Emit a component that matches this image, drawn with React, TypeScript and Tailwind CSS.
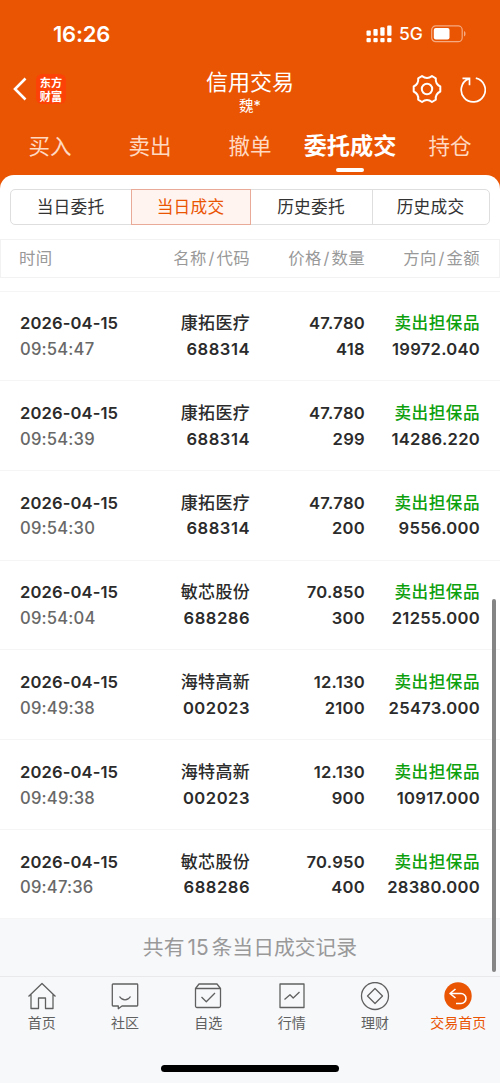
import type { ReactNode } from 'react'

interface Trade {
  time: string
  name: string
  code: string
  price: string
  count: string
  amount: string
}

const trades: Trade[] = [
  { time: '09:54:47', name: '康拓医疗', code: '688314', price: '47.780', count: '418', amount: '19972.040' },
  { time: '09:54:39', name: '康拓医疗', code: '688314', price: '47.780', count: '299', amount: '14286.220' },
  { time: '09:54:30', name: '康拓医疗', code: '688314', price: '47.780', count: '200', amount: '9556.000' },
  { time: '09:54:04', name: '敏芯股份', code: '688286', price: '70.850', count: '300', amount: '21255.000' },
  { time: '09:49:38', name: '海特高新', code: '002023', price: '12.130', count: '2100', amount: '25473.000' },
  { time: '09:49:38', name: '海特高新', code: '002023', price: '12.130', count: '900', amount: '10917.000' },
  { time: '09:47:36', name: '敏芯股份', code: '688286', price: '70.950', count: '400', amount: '28380.000' },
]

const tabs = ['买入', '卖出', '撤单', '委托成交', '持仓']
const segments = ['当日委托', '当日成交', '历史委托', '历史成交']
const columns = [['名称', '代码'], ['价格', '数量'], ['方向', '金额']]

const navItems: { label: string; icon: ReactNode }[] = [
  { label: '首页', icon: <path d="M1.5 14.5 15 1.5l13.500 13M4 12.500V26.500h7.500V16h7v10.500H26V12.500" /> },
  { label: '社区', icon: <path d="M3 2h24a.7.7 0 0 1 .7.700v20.600a.7.7 0 0 1-.7.700H12l-3.700 2.700V24H3a.7.7 0 0 1-.7-.700V2.700A.7.7 0 0 1 3 2ZM9.500 14.500c2.700 4.400 8.300 4.400 11 0" /> },
  { label: '自选', icon: <path d="M6 2h18l3.500 4.500V24a1.500 1.500 0 0 1-1.500 1.500H4A1.500 1.500 0 0 1 2.500 24V6.500ZM2.500 6.500h25M8.500 15l4.800 4.800L22 11" /> },
  { label: '行情', icon: <path d="M3 2h24v23.500H3ZM7.500 17.500l5.500-4.700 3.200 3.200L22.500 10" /> },
  { label: '理财', icon: <><circle cx="15" cy="14" r="13.500" /><path d="m15 6.500 7.500 7.500-7.500 7.500L7.500 14Z" /></> },
  { label: '交易首页', icon: <><circle cx="15" cy="14" r="13.700" fill="#ea5504" stroke="none" /><path d="M12.500 7 7 11.500l5.500 4.500M7.500 11.500h10.500a5 5 0 0 1 0 10h-5" stroke="#fff" strokeWidth="1.6" /></> },
]

function StatusBar() {
  return (
    <div className="flex h-[60px] items-center justify-between pt-[7px] pr-[33px] pl-[53px]">
      <span className="text-[22px] leading-[26px] font-semibold tracking-[-0.2px]">16:26</span>
      <div className="flex items-center">
        <svg className="h-[18px] w-[26px]" viewBox="0 0 26 18" fill="white">
          {[0, 1, 2, 3].map(i => (
            <g key={i}>
              <rect x={0.5 + i * 6.9} y={5.6 - i * 1.7} width="4.3" height={5.2 + i * 1.7} rx="1" />
              <rect x={0.5 + i * 6.9} y="13" width="4.3" height="4.2" rx="1" />
            </g>
          ))}
        </svg>
        <span className="ml-[7px] w-[25px] text-[17.5px] leading-[20px] font-medium">5G</span>
        <svg className="ml-[7px] h-[18px] w-[36px]" viewBox="0 0 36 18">
          <rect x=".7" y=".9" width="30.5" height="15.8" rx="4" fill="none" stroke="white" strokeOpacity=".5" strokeWidth="1.2" />
          <rect x="2.8" y="3" width="15.7" height="11.6" rx="2" fill="white" />
          <path d="M33 6v5.500c2-.7 2-4.800 0-5.500Z" fill="white" fillOpacity=".5" />
        </svg>
      </div>
    </div>
  )
}

function TitleBar() {
  return (
    <div className="grid h-[58px] grid-cols-[1fr_auto_1fr] items-center">
      <div className="flex items-center pl-[13px]">
        <svg className="h-[24px] w-[14px]" viewBox="0 0 14 24" fill="none" stroke="white" strokeWidth="2.6">
          <path d="M12.500 1.500 2 12l10.500 10.500" />
        </svg>
        <div className="ml-[9px] flex h-[30px] w-[30px] items-center justify-center rounded-[6px] bg-[#fc4206] text-center font-['Noto_Sans_CJK_SC',sans-serif] text-[11.2px] leading-[14px] font-bold">
          <span>东方<br />财富</span>
        </div>
      </div>
      <div className="flex flex-col items-center">
        <h1 className="mt-[5px] text-[22px] leading-[28px]">信用交易</h1>
        <span className="text-[14.5px] leading-[20px]">魏*</span>
      </div>
      <div className="flex items-center justify-end gap-[18px] pr-[14px]">
        <svg className="h-[30px] w-[30px]" viewBox="0 0 30 30" fill="none" stroke="white" strokeWidth="2" strokeLinejoin="round">
          <path d="M10 2Q12.500 4 15 4T20 2L23.800 4.300Q23.500 7.500 24.700 9.400T28.300 12.500V17.500Q25.900 18.700 24.700 20.600T23.800 25.700L20 28Q17.500 26 15 26T10 28L6.200 25.700Q6.500 22.500 5.300 20.600T1.700 17.500V12.500Q4.100 11.300 5.300 9.400T6.200 4.300Z" />
          <circle cx="15" cy="15" r="5.2" />
        </svg>
        <svg className="h-[28px] w-[26px]" viewBox="0 0 26 28" fill="none" stroke="white" strokeWidth="1.7">
          <path d="M15.800 3.200A12 12 0 1 1 8.500 3.900M2.500 3.300h7v7" />
        </svg>
      </div>
    </div>
  )
}

function TradeRow({ trade }: { trade: Trade }) {
  return (
    <div className="grid h-[89.7px] grid-cols-[130px_100px_115px_115px] content-center border-b border-[#f5f5f6] px-5 pt-[2.5px] text-right text-[16.6px] leading-[25.7px] font-semibold tracking-[0.27px] text-[#2b2b2b]">
      <span className="text-left tracking-[0.1px]">2026-04-15</span>
      <span className="text-[17px] font-medium tracking-[0.3px]">{trade.name}</span>
      <span>{trade.price}</span>
      <span className="font-medium tracking-[0.5px] text-[#0ca00c]">卖出担保品</span>
      <span className="text-left font-medium tracking-[0.2px] text-[#686868]">{trade.time}</span>
      <span className="tracking-[0.5px]">{trade.code}</span>
      <span>{trade.count}</span>
      <span>{trade.amount}</span>
    </div>
  )
}

export default function App() {
  return (
    <div className="relative flex h-[1083px] w-[500px] flex-col overflow-hidden bg-[#ea5504] font-['Inter','Noto_Sans_CJK_SC',sans-serif]">
      <header className="h-[175px] shrink-0 text-white">
        <StatusBar />
        <TitleBar />
        <nav className="grid h-[57px] grid-cols-5">
          {tabs.map(tab => (
            <div key={tab} className="flex flex-col items-center pt-[11px]">
              <span className={`leading-[34px] whitespace-nowrap ${tab === '委托成交' ? 'text-[23.2px] font-bold' : 'text-[21.5px] text-[#ffd9c2]'}`}>{tab}</span>
              {tab === '委托成交' && <span className="mt-[5px] h-[4px] w-[28px] rounded-full bg-white" />}
            </div>
          ))}
        </nav>
      </header>

      <main className="flex flex-1 flex-col rounded-t-[14px] bg-white pt-[14px]">
        <div className="mx-[10px] grid h-[36px] shrink-0 grid-cols-[120px_120px_121px_1fr] rounded-[5px] border border-[#dedede]">
          {segments.map((label, i) => (
            <button
              key={label}
              className={`pt-[2px] pr-[1px] text-[16.7px] tracking-[0.2px] ${i === 1 ? '-my-px border border-[#e9ab98] bg-[#fff4f0] text-[#ea5504]' : 'text-[#333]'} ${i === 3 ? 'border-l border-[#dedede]' : ''}`}
            >
              {label}
            </button>
          ))}
        </div>

        <div className="mt-[14px] grid h-[39px] shrink-0 grid-cols-[130px_100px_115px_115px] items-center border border-[#f2f2f2] px-[19px] text-right text-[16.4px] tracking-[0.4px] text-[#999]">
          <span className="-ml-px text-left">时间</span>
          {columns.map(([a, b]) => (
            <span key={a}>{a}<span className="mx-[1.6px]">/</span>{b}</span>
          ))}
        </div>
        <div className="h-[13.5px] shrink-0 border-b border-[#f5f5f6]" />

        {trades.map(trade => <TradeRow key={trade.time + trade.amount} trade={trade} />)}

        <div className="flex h-[56.5px] shrink-0 items-center justify-center bg-[#f7f8fa] text-[20.8px] text-[#999]">
          <span>共有<span className="mx-[3px]">15</span>条当日成交记录</span>
        </div>

        <footer className="flex flex-1 flex-col items-center border-t border-[#e9e9eb] bg-[#f7f8fa]">
          <div className="grid w-full grid-cols-6 pt-[5px]">
            {navItems.map((item, i) => (
              <div key={item.label} className={`flex flex-col items-center ${i === 5 ? 'text-[#ea5504]' : 'text-[#606060]'}`}>
                <svg className="h-[29px] w-[30px]" viewBox="0 0 30 29" fill="none" stroke="currentColor" strokeWidth="1.3" strokeLinejoin="round">
                  {item.icon}
                </svg>
                <span className="mt-[2px] text-[14px] leading-[20px]">{item.label}</span>
              </div>
            ))}
          </div>
          <div className="mt-[32px] h-[7px] w-[178px] rounded-full bg-black" />
        </footer>
      </main>

      <div className="absolute top-[599px] right-[4px] h-[373px] w-[4px] rounded-full bg-[#858585]" />
    </div>
  )
}
